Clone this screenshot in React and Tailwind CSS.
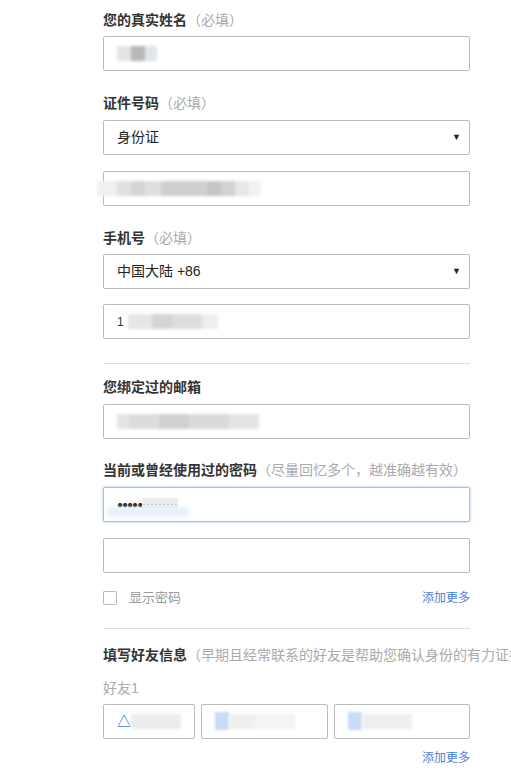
import { useState } from "react";

const font = { fontFamily: '"Liberation Sans", "Noto Sans CJK SC", sans-serif' };

// blurred placeholder for masked personal data
const Smudge = ({ blocks, className = "" }) => (
    <div className={`flex items-center blur-[1.5px] ${className}`}>
        {blocks.map(([w, c], i) => (
            <div key={i} className="h-[15px]" style={{ width: w, background: c }} />
        ))}
    </div>
);

const Label = ({ title, hint, className = "" }) => (
    <div className={`text-[14px] leading-5 whitespace-nowrap ${className}`}>
        <span className="font-bold text-[#333]">{title}</span>
        {hint && <span className="text-[#aaa]">{hint}</span>}
    </div>
);

const Box = ({ children, className = "" }) => (
    <div className={`h-[35px] flex items-center border border-[#bbb] rounded-[2px] bg-white px-[13px] ${className}`}>
        {children}
    </div>
);

const Select = ({ value }) => (
    <Box className="justify-between">
        <span className="text-[14px] text-[#222]">{value}</span>
        <span className="text-[9px] text-[#222] -mr-[5px]">▼</span>
    </Box>
);

const App = () => {
    const [show, setShow] = useState(false);

    return (
        <div className="w-[511px] min-h-[775px] bg-white overflow-hidden" style={font}>
            <div className="ml-[103px] w-[367px] pt-[10px]">
                <Label title="您的真实姓名" hint="（必填）" />
                <Box className="mt-[6px]">
                    <Smudge blocks={[[14, "#e4e4e4"], [14, "#b8b8b8"], [12, "#e2e6ea"]]} />
                </Box>

                <Label title="证件号码" hint="（必填）" className="mt-[22px]" />
                <div className="mt-[7px]">
                    <Select value="身份证" />
                </div>
                <Box className="mt-[16px]">
                    <Smudge
                        className="-ml-[20px]"
                        blocks={[[20, "#f0f0f0"], [14, "#e0e0e0"], [14, "#d2d6d8"], [16, "#dedede"], [46, "#cfcfcf"], [14, "#c6c6c6"], [14, "#d2d2d2"], [14, "#e6e8ea"], [12, "#f2f2f2"]]}
                    />
                </Box>

                <Label title="手机号" hint="（必填）" className="mt-[22px]" />
                <div className="mt-[6px]">
                    <Select value="中国大陆 +86" />
                </div>
                <Box className="mt-[15px]">
                    <span className="text-[12px] text-[#333] mr-1">1</span>
                    <Smudge blocks={[[24, "#e6e6e6"], [20, "#d4d4d4"], [30, "#dcdcdc"], [16, "#eeeeee"]]} />
                </Box>

                <div className="mt-[24px] border-t border-[#e2e2e2]" />

                <Label title="您绑定过的邮箱" className="mt-[13px]" />
                <Box className="mt-[7px]">
                    <Smudge blocks={[[12, "#e4e4e4"], [30, "#dcdcdc"], [30, "#d0d0d0"], [40, "#dadada"], [30, "#e4e4e4"]]} />
                </Box>

                <Label title="当前或曾经使用过的密码" hint="（尽量回忆多个，越准确越有效）" className="mt-[21px]" />
                <Box className="mt-[7px] border-[#6a9ee0] shadow-[0_0_3px_#9cc0f0]">
                    <span className="text-[10px] tracking-[-1px] text-[#111]">●●●●●</span>
                    <span className="text-[9px] tracking-[1px] text-[#999] bg-[#ececec]">·········</span>
                    <div className="w-[80px] h-[10px] bg-[#e8f0fc] blur-[2px] mt-[14px] -ml-[70px]" />
                </Box>
                <Box className="mt-[16px]" />

                <div className="mt-[15px] flex items-center justify-between">
                    <label className="flex items-center gap-[12px] cursor-pointer">
                        <input
                            type="checkbox"
                            checked={show}
                            onChange={() => setShow(!show)}
                            className="appearance-none w-[14px] h-[14px] border border-[#bbb] rounded-[1px] bg-white"
                        />
                        <span className="text-[13px] text-[#999]">显示密码</span>
                    </label>
                    <span className="text-[12px] text-[#4a7fd4]">添加更多</span>
                </div>

                <div className="mt-[20px] border-t border-[#e2e2e2]" />

                <Label title="填写好友信息" hint="（早期且经常联系的好友是帮助您确认身份的有力证据）" className="mt-[16px]" />
                <div className="mt-[13px] text-[14px] leading-5 text-[#aaa]">好友1</div>

                <div className="mt-[6px] flex gap-[6px]">
                    <Box className="w-[92px] px-[8px]">
                        <span className="text-[14px] text-[#3b7ddd] font-bold">△</span>
                        <Smudge blocks={[[50, "#ececec"]]} />
                    </Box>
                    <Box className="flex-1 px-[8px]">
                        <div className="w-[14px] h-[18px] bg-[#c8dcf6] blur-[1px]" />
                        <Smudge blocks={[[26, "#efefef"], [40, "#f4f4f4"]]} />
                    </Box>
                    <Box className="w-[136px] px-[10px]">
                        <div className="w-[14px] h-[18px] bg-[#c8dcf6] blur-[1px]" />
                        <Smudge blocks={[[50, "#eeeeee"]]} />
                    </Box>
                </div>

                <div className="mt-[10px] text-right text-[12px] text-[#4a7fd4]">添加更多</div>
            </div>
        </div>
    );
};

export default App;
